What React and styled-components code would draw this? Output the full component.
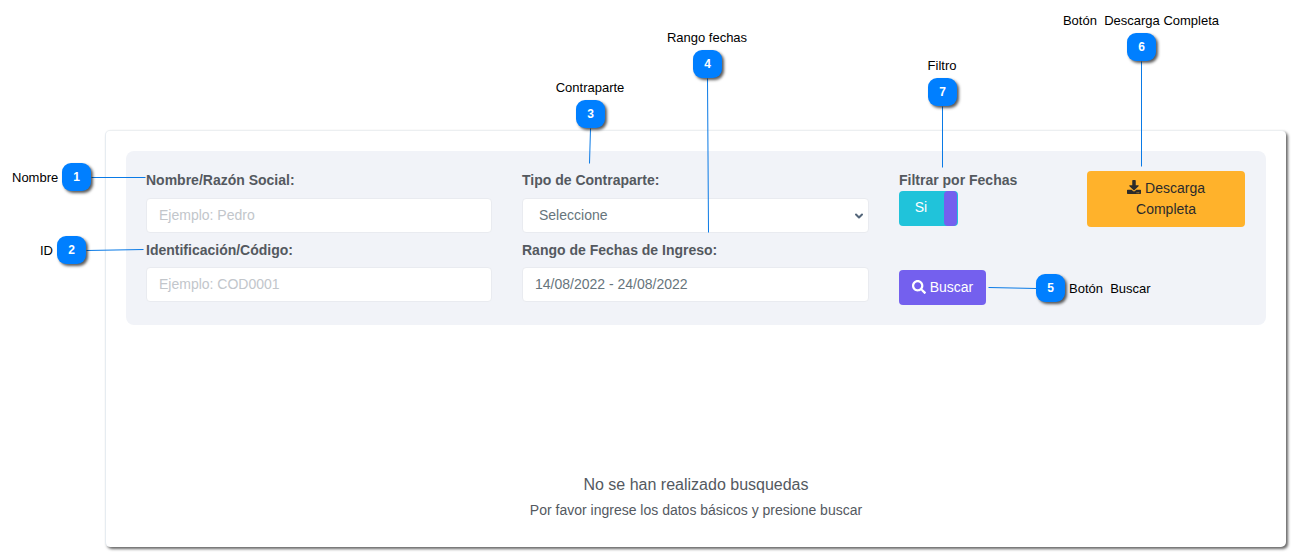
import React from 'react';
import styled, { createGlobalStyle } from 'styled-components';
import { ChevronDown } from 'lucide-react';
import { FaDownload, FaSearch } from 'react-icons/fa';

const GlobalStyle = createGlobalStyle`
  html, body {
    margin: 0;
    padding: 0;
    background: #fff;
    overflow: hidden;
  }
  * { box-sizing: border-box; }
`;

const Page = styled.div`
  position: relative;
  width: 1295px;
  height: 556px;
  padding: 130px 9px 0 105px;
  font-family: "Liberation Sans", Arial, sans-serif;
`;

const Card = styled.div`
  height: 417px;
  padding: 21px 20px 0 21px;
  background: #fff;
  border-radius: 5px;
  border-top: 1px solid #eceff1;
  border-left: 1px solid #e6ecf1;
  box-shadow: 2px 2px 3px rgba(0, 0, 0, 0.6);
`;

const Panel = styled.div`
  display: grid;
  grid-template-columns: 346px 347px 158px 158px;
  column-gap: 30px;
  height: 174px;
  margin-top: -1px;
  margin-left: -1px;
  padding: 19px 21px 0 20px;
  background: #f1f3f8;
  border-radius: 8px;
`;

const Column = styled.div`
  display: flex;
  flex-direction: column;
`;

const Field = styled.div`
  display: flex;
  flex-direction: column;
  margin-bottom: 7px;
`;

const Label = styled.label`
  height: 21px;
  margin-bottom: ${p => p.$gap ?? 7}px;
  font-size: 14px;
  line-height: 21px;
  font-weight: 700;
  color: #54595f;
  white-space: nowrap;
`;

const TextInput = styled.input`
  width: 100%;
  height: 35px;
  padding: 0 12px 2px;
  font: 14px "Liberation Sans", Arial, sans-serif;
  color: #67757c;
  background: #fff;
  border: 1px solid #e9ebf0;
  border-radius: 4px;
  outline: none;

  &::placeholder {
    color: #c2c6cb;
    opacity: 1;
  }
`;

const SelectWrap = styled.div`
  position: relative;
  height: 35px;
  color: #54667a;

  svg {
    position: absolute;
    top: 12px;
    right: 4px;
  }
`;

const Select = styled.select`
  width: 100%;
  height: 35px;
  padding: 0 16px 2px;
  font: 14px "Liberation Sans", Arial, sans-serif;
  color: #67757c;
  background: #fff;
  border: 1px solid #e9ebf0;
  border-radius: 4px;
  outline: none;
  appearance: none;
`;

const Toggle = styled.div`
  display: flex;
  justify-content: space-between;
  width: 59px;
  height: 35px;
  background: #20c3da;
  border-radius: 4px;
  overflow: hidden;
`;

const ToggleText = styled.span`
  flex: 1;
  padding-right: 1px;
  font-size: 14px;
  line-height: 33px;
  text-align: center;
  color: #fff;
`;

const ToggleHandle = styled.span`
  width: 13px;
  margin: 0 1px 0 0;
  background: #7460ee;
  border-radius: 4px;
`;

const SearchButton = styled.button`
  display: flex;
  align-items: center;
  justify-content: center;
  gap: 4px;
  width: 87px;
  height: 35px;
  margin-top: 44px;
  padding: 0 0 2px;
  font: 14px "Liberation Sans", Arial, sans-serif;
  color: #fff;
  background: #7460ee;
  border: 0;
  border-radius: 4px;
`;

const DownloadButton = styled.button`
  width: 158px;
  height: 56px;
  margin-top: 1px;
  padding: 7px 20px;
  font: 14px/21px "Liberation Sans", Arial, sans-serif;
  color: #2b2b2b;
  background: #ffb22b;
  border: 0;
  border-radius: 4px;

  svg {
    margin-right: 4px;
    vertical-align: -1px;
  }
`;

const Empty = styled.div`
  display: flex;
  flex-direction: column;
  align-items: center;
  margin: 150px 0 0 -1px;
  color: #54595f;
`;

const EmptyTitle = styled.div`
  font-size: 16px;
  line-height: 20px;
`;

const EmptyText = styled.div`
  margin-top: 5px;
  font-size: 14px;
  line-height: 20px;
`;

const Leaders = styled.svg`
  position: absolute;
  top: 0;
  left: 0;
  pointer-events: none;
`;

const Badge = styled.div`
  position: absolute;
  left: ${p => p.$x}px;
  top: ${p => p.$y}px;
  width: 29px;
  height: 28px;
  font-size: 12px;
  font-weight: 700;
  line-height: 28px;
  text-align: center;
  color: #fff;
  background: #007fff;
  border-radius: 9px;
  box-shadow: 2px 2px 3px rgba(0, 0, 0, 0.65);
`;

const Caption = styled.div`
  position: absolute;
  left: ${p => p.$x}px;
  top: ${p => p.$y}px;
  font-size: 13px;
  line-height: 15px;
  color: #000;
  white-space: pre;
  transform: ${p => (p.$center ? 'translateX(-50%)' : 'none')};
`;

const marks = [
  { n: 1, x: 62, y: 163, text: 'Nombre', tx: 12, ty: 170, line: [91, 177, 145, 177] },
  { n: 2, x: 57, y: 236, text: 'ID', tx: 40, ty: 243, line: [86, 250, 143, 249] },
  { n: 3, x: 576, y: 100, text: 'Contraparte', tx: 590, ty: 80, center: true, line: [590, 128, 589, 163] },
  { n: 4, x: 693, y: 50, text: 'Rango fechas', tx: 707, ty: 30, center: true, line: [707, 78, 708, 232] },
  { n: 5, x: 1036, y: 274, text: 'Botón  Buscar', tx: 1069, ty: 281, line: [988, 287, 1036, 288] },
  { n: 6, x: 1127, y: 33, text: 'Botón  Descarga Completa', tx: 1141, ty: 13, center: true, line: [1141, 61, 1141, 166] },
  { n: 7, x: 928, y: 78, text: 'Filtro', tx: 942, ty: 58, center: true, line: [942, 106, 942, 167] },
];

export default function App() {
  return (
    <Page>
      <GlobalStyle />
      <Card>
        <Panel>
          <Column>
            <Field>
              <Label>Nombre/Razón Social:</Label>
              <TextInput placeholder="Ejemplo: Pedro" />
            </Field>
            <Field>
              <Label $gap={6}>Identificación/Código:</Label>
              <TextInput placeholder="Ejemplo: COD0001" />
            </Field>
          </Column>
          <Column>
            <Field>
              <Label>Tipo de Contraparte:</Label>
              <SelectWrap>
                <Select defaultValue="">
                  <option value="">Seleccione</option>
                </Select>
                <ChevronDown size={12} strokeWidth={4} />
              </SelectWrap>
            </Field>
            <Field>
              <Label $gap={6}>Rango de Fechas de Ingreso:</Label>
              <TextInput defaultValue="14/08/2022 - 24/08/2022" />
            </Field>
          </Column>
          <Column>
            <Label $gap={0}>Filtrar por Fechas</Label>
            <Toggle>
              <ToggleText>Si</ToggleText>
              <ToggleHandle />
            </Toggle>
            <SearchButton>
              <FaSearch size={14} />
              Buscar
            </SearchButton>
          </Column>
          <Column>
            <DownloadButton>
              <FaDownload size={14} />
              Descarga Completa
            </DownloadButton>
          </Column>
        </Panel>
        <Empty>
          <EmptyTitle>No se han realizado busquedas</EmptyTitle>
          <EmptyText>Por favor ingrese los datos básicos y presione buscar</EmptyText>
        </Empty>
      </Card>
      <Leaders width="1295" height="556">
        {marks.map(m => (
          <line
            key={m.n}
            x1={m.line[0] + 0.5}
            y1={m.line[1] + 0.5}
            x2={m.line[2] + 0.5}
            y2={m.line[3] + 0.5}
            stroke="#0a7ae6"
            strokeWidth="1"
          />
        ))}
      </Leaders>
      {marks.map(m => (
        <React.Fragment key={m.n}>
          <Badge $x={m.x} $y={m.y}>{m.n}</Badge>
          <Caption $x={m.tx} $y={m.ty} $center={m.center}>{m.text}</Caption>
        </React.Fragment>
      ))}
    </Page>
  );
}
